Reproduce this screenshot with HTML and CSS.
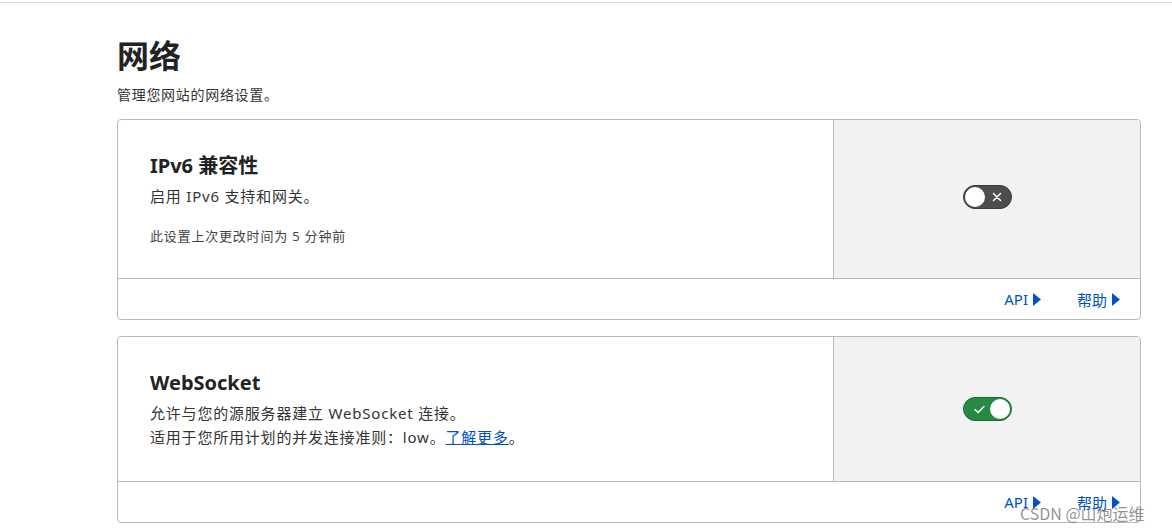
FILE: index.html
```html
<!DOCTYPE html>
<html lang="zh-CN">
<head>
  <meta charset="UTF-8" />
  <title>网络</title>
  <link rel="stylesheet" href="styles.css">
</head>
<body>
  <div class="topbar"></div>

  <div class="page">
    <h1>网络</h1>
    <p class="subtitle">管理您网站的网络设置。</p>

    <div class="card">
      <div class="card-main">
        <div class="card-body">
          <h3>IPv6 兼容性</h3>
          <p class="desc">启用 IPv6 支持和网关。</p>
          <p class="meta">此设置上次更改时间为 5 分钟前</p>
        </div>
        <div class="card-control first">
          <span class="toggle off">
            <span class="knob"></span>
            <svg class="mark" width="10" height="10" viewBox="0 0 10 10"><path d="M1.5 1.5 L8.5 8.5 M8.5 1.5 L1.5 8.5" stroke="#fff" stroke-width="1.5" stroke-linecap="round"/></svg>
          </span>
        </div>
      </div>
      <div class="card-footer">
        <a href="#">API <svg width="8" height="13" viewBox="0 0 8 13"><path d="M0 0 L8 6.5 L0 13 Z" fill="#0051c3"/></svg></a>
        <a href="#">帮助 <svg width="8" height="13" viewBox="0 0 8 13"><path d="M0 0 L8 6.5 L0 13 Z" fill="#0051c3"/></svg></a>
      </div>
    </div>

    <div class="card">
      <div class="card-main">
        <div class="card-body">
          <h3>WebSocket</h3>
          <p class="desc">允许与您的源服务器建立 WebSocket 连接。<br>适用于您所用计划的并发连接准则：low。<a class="link" href="#">了解更多</a>。</p>
        </div>
        <div class="card-control">
          <span class="toggle on">
            <svg class="mark" width="11" height="9" viewBox="0 0 11 9"><path d="M1 4.5 L4 7.5 L10 1.5" stroke="#fff" stroke-width="1.5" fill="none" stroke-linecap="round" stroke-linejoin="round"/></svg>
            <span class="knob"></span>
          </span>
        </div>
      </div>
      <div class="card-footer">
        <a href="#">API <svg width="8" height="13" viewBox="0 0 8 13"><path d="M0 0 L8 6.5 L0 13 Z" fill="#0051c3"/></svg></a>
        <a href="#">帮助 <svg width="8" height="13" viewBox="0 0 8 13"><path d="M0 0 L8 6.5 L0 13 Z" fill="#0051c3"/></svg></a>
      </div>
    </div>
  </div>

  <div class="watermark">CSDN @山炮运维</div>
</body>
</html>
```

FILE: styles.css
```css
body {
  margin: 0;
  font-family: "Noto Sans", "Noto Sans CJK SC", sans-serif;
  color: #313131;
  background: #fff;
  overflow: hidden;
}

.topbar {
  height: 2px;
  border-bottom: 1px solid #dcdcdc;
}

.page {
  margin-left: 117px;
  width: 1024px;
}

h1 {
  margin: 33px 0 0;
  font-size: 32px;
  line-height: 40px;
  font-weight: bold;
  color: #222;
}

.subtitle {
  margin: 8px 0 13px;
  font-size: 14px;
  line-height: 22px;
  letter-spacing: 0.7px;
  color: #333;
}

.card {
  border: 1px solid #b9b9b9;
  border-radius: 4px;
  margin-bottom: 16px;
  overflow: hidden;
}

.card-main {
  display: flex;
}

.card-body {
  flex: 1;
  padding: 32px;
}

.card-body h3 {
  margin: 0;
  font-size: 20px;
  line-height: 28px;
  font-weight: bold;
  color: #222;
}

.desc {
  margin: 4px 0 0;
  font-size: 15px;
  line-height: 24px;
  letter-spacing: 0.8px;
  color: #333;
}

.meta {
  margin: 18px 0 0;
  font-size: 13px;
  line-height: 20px;
  letter-spacing: 0.8px;
  color: #444;
}

.link {
  color: #0051c3;
  text-decoration: underline;
}

.card-control {
  width: 306px;
  background: #f2f2f2;
  border-left: 1px solid #b9b9b9;
  display: flex;
  justify-content: center;
  align-items: center;
}

.card-control.first {
  padding-bottom: 4px;
}

.toggle {
  width: 49px;
  height: 24px;
  box-sizing: border-box;
  border-radius: 12px;
  display: flex;
  align-items: center;
  justify-content: space-between;
  padding: 0 1px;
}

.toggle.off {
  background: #4d4d4d;
  border: 1px solid #3a3a3a;
  padding-right: 9px;
}

.toggle.on {
  background: #268a42;
  border: 1px solid #1b6b31;
  padding-left: 10px;
}

.knob {
  width: 20px;
  height: 20px;
  border-radius: 50%;
  background: #fff;
}

.card-footer {
  border-top: 1px solid #b9b9b9;
  height: 40px;
  display: flex;
  justify-content: flex-end;
  align-items: center;
  gap: 36px;
  padding-right: 20px;
}

.card-footer a {
  color: #0051c3;
  text-decoration: none;
  font-size: 15px;
  display: flex;
  align-items: center;
  gap: 5px;
}

.watermark {
  position: absolute;
  left: 1020px;
  top: 501px;
  font-size: 16px;
  color: rgba(110, 110, 110, 0.75);
  font-family: "Noto Sans CJK SC", sans-serif;
  white-space: nowrap;
}
```
